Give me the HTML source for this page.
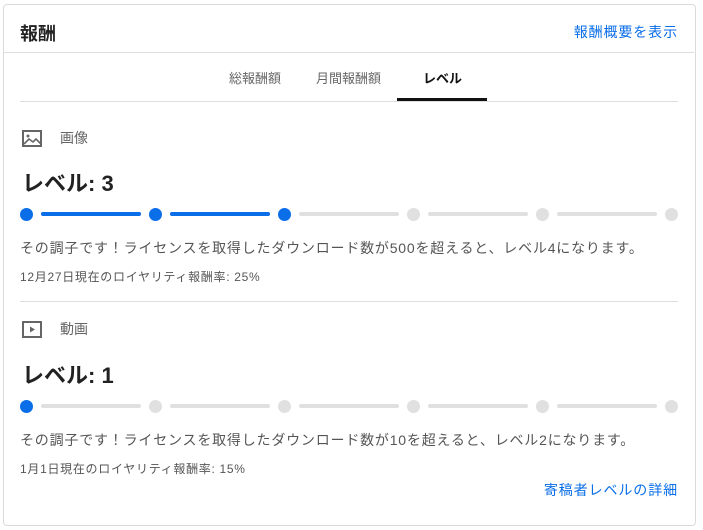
<!DOCTYPE html><html><head><meta charset="utf-8"><style>
body{margin:0;width:703px;height:530px;background:#fff;font-family:"Liberation Sans","Noto Sans CJK JP",sans-serif;position:relative;overflow:hidden}
.a{position:absolute;white-space:nowrap}
.card{position:absolute;left:3px;top:4px;width:691px;height:520px;border:1px solid #dadada;border-radius:4px}
.dot{position:absolute;width:13px;height:13px;border-radius:50%}
.ln{position:absolute;height:4px;width:100px;border-radius:2px}
.b{background:#0a6ee8}.g{background:#e0e0e0}
.t{font-size:14px;color:#555;letter-spacing:0.8px}
.s{font-size:12px;color:#555;letter-spacing:0.7px}
</style></head><body>
<div class="card"></div>
<div class="a" style="left:20px;top:20px;font-size:18px;font-weight:bold;color:#222">報酬</div>
<div class="a" style="right:25px;top:22px;font-size:14px;color:#0a6ee8;letter-spacing:0.9px">報酬概要を表示</div>
<div class="a" style="left:4px;top:52px;width:690px;height:1px;background:#ddd"></div>
<div class="a" style="left:229px;top:68px;font-size:13px;color:#666">総報酬額</div>
<div class="a" style="left:316px;top:68px;font-size:13px;color:#666">月間報酬額</div>
<div class="a" style="left:423px;top:68px;font-size:13px;color:#111;font-weight:bold">レベル</div>
<div class="a" style="left:397px;top:98px;width:90px;height:3px;background:#111"></div>
<div class="a" style="left:20px;top:101px;width:658px;height:1px;background:#ddd"></div>

<svg class="a" style="left:22px;top:130px" width="20" height="17" viewBox="0 0 20 17"><rect x="1" y="1" width="18" height="15" fill="none" stroke="#666" stroke-width="2"/><circle cx="6" cy="6" r="1.5" fill="#666"/><path d="M2 14l5-5 4 3 3-3 5 5" fill="none" stroke="#666" stroke-width="1.6"/></svg>
<div class="a" style="left:60px;top:128px;font-size:14px;color:#666">画像</div>
<div class="a" style="left:22px;top:166px;font-size:22px;font-weight:bold;color:#222">レベル: 3</div>
<div class="dot b" style="left:20px;top:208px"></div><div class="ln b" style="left:41px;top:212px"></div>
<div class="dot b" style="left:149px;top:208px"></div><div class="ln b" style="left:170px;top:212px"></div>
<div class="dot b" style="left:278px;top:208px"></div><div class="ln g" style="left:299px;top:212px"></div>
<div class="dot g" style="left:407px;top:208px"></div><div class="ln g" style="left:428px;top:212px"></div>
<div class="dot g" style="left:536px;top:208px"></div><div class="ln g" style="left:557px;top:212px"></div>
<div class="dot g" style="left:665px;top:208px"></div>
<div class="a t" style="left:20px;top:238px">その調子です！ライセンスを取得したダウンロード数が500を超えると、レベル4になります。</div>
<div class="a s" style="left:20px;top:268px">12月27日現在のロイヤリティ報酬率: 25%</div>
<div class="a" style="left:20px;top:301px;width:658px;height:1px;background:#ddd"></div>

<svg class="a" style="left:22px;top:321px" width="20" height="17" viewBox="0 0 20 17"><rect x="1" y="1" width="18" height="15" fill="none" stroke="#666" stroke-width="2"/><path d="M8 5.5v6l5-3z" fill="#666"/></svg>
<div class="a" style="left:60px;top:319px;font-size:14px;color:#666">動画</div>
<div class="a" style="left:22px;top:358px;font-size:22px;font-weight:bold;color:#222">レベル: 1</div>
<div class="dot b" style="left:20px;top:400px"></div><div class="ln g" style="left:41px;top:404px"></div>
<div class="dot g" style="left:149px;top:400px"></div><div class="ln g" style="left:170px;top:404px"></div>
<div class="dot g" style="left:278px;top:400px"></div><div class="ln g" style="left:299px;top:404px"></div>
<div class="dot g" style="left:407px;top:400px"></div><div class="ln g" style="left:428px;top:404px"></div>
<div class="dot g" style="left:536px;top:400px"></div><div class="ln g" style="left:557px;top:404px"></div>
<div class="dot g" style="left:665px;top:400px"></div>
<div class="a t" style="left:20px;top:430px">その調子です！ライセンスを取得したダウンロード数が10を超えると、レベル2になります。</div>
<div class="a s" style="left:20px;top:460px">1月1日現在のロイヤリティ報酬率: 15%</div>
<div class="a" style="right:25px;top:480px;font-size:14px;color:#0a6ee8;letter-spacing:0.9px">寄稿者レベルの詳細</div>
</body></html>
